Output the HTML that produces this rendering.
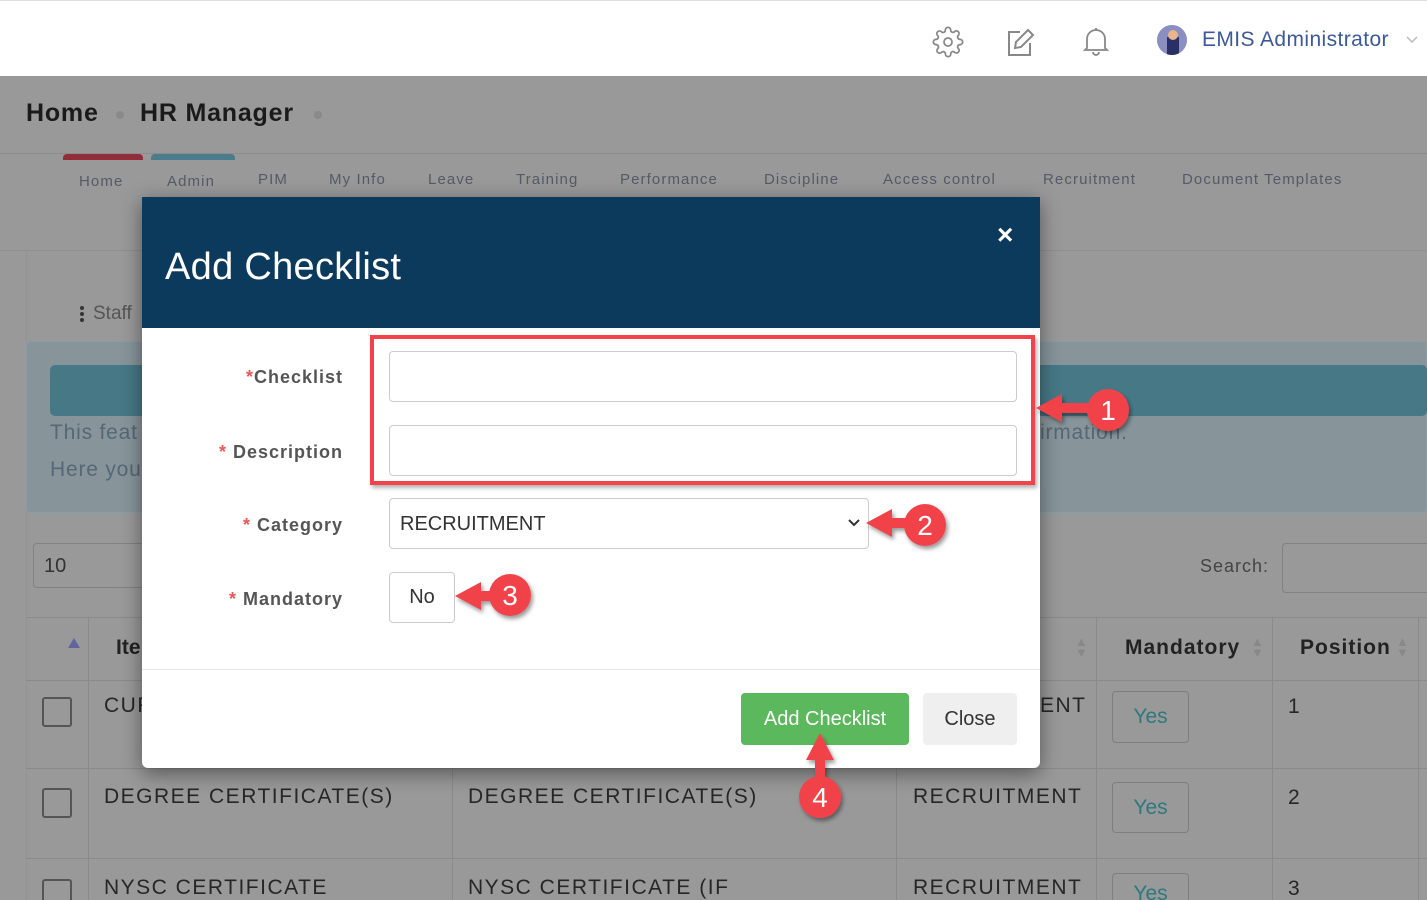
<!DOCTYPE html>
<html style="overflow:hidden;height:900px"><head><meta charset="utf-8"><style>
*{box-sizing:border-box;margin:0;padding:0}
body{width:1427px;height:900px;overflow:hidden;position:relative;background:#999;font-family:"Liberation Sans",sans-serif}
.a{position:absolute}
.t{white-space:nowrap}
</style></head><body>
<!-- top bar -->
<div class="a" style="left:0;top:0;width:1427px;height:76px;background:#fff;border-top:1px solid #ddd"></div>
<svg class="a" style="left:932px;top:26px" width="32" height="32" viewBox="0 0 24 24" fill="none" stroke="#888" stroke-width="1.3"><circle cx="12" cy="12" r="3"/><path d="M19.4 15a1.65 1.65 0 0 0 .33 1.82l.06.06a2 2 0 1 1-2.830 2.83l-.06-.06a1.65 1.65 0 0 0-1.82-.33 1.65 1.65 0 0 0-1 1.51V21a2 2 0 1 1-4 0v-.09A1.65 1.65 0 0 0 9 19.4a1.65 1.65 0 0 0-1.82.33l-.06.06a2 2 0 1 1-2.83-2.830l.06-.06A1.65 1.65 0 0 0 4.68 15a1.65 1.65 0 0 0-1.51-1H3a2 2 0 1 1 0-4h.09A1.650 1.65 0 0 0 4.6 9a1.65 1.65 0 0 0-.33-1.82l-.06-.06a2 2 0 1 1 2.83-2.83l.06.06A1.65 1.65 0 0 0 9 4.68a1.65 1.65 0 0 0 1-1.51V3a2 2 0 1 1 4 0v.09a1.65 1.65 0 0 0 1 1.51 1.65 1.65 0 0 0 1.82-.33l.06-.06a2 2 0 1 1 2.83 2.83l-.06.06A1.65 1.65 0 0 0 19.4 9a1.65 1.65 0 0 0 1.51 1H21a2 2 0 1 1 0 4h-.09a1.65 1.65 0 0 0-1.51 1z"/></svg>
<svg class="a" style="left:1006px;top:27px" width="30" height="30" viewBox="0 0 30 30" fill="none" stroke="#888" stroke-width="2"><path d="M14 5H3v23h21V16"/><path d="M22 3l5 5-12 12-6 1 1-6z"/></svg>
<svg class="a" style="left:1082px;top:26px" width="28" height="30" viewBox="0 0 28 30" fill="none" stroke="#888" stroke-width="1.8"><path d="M5 22V13a9 9 0 0 1 18 0v9l2 2H3z"/><path d="M11 26a3 3 0 0 0 6 0"/><path d="M14 2v2"/></svg>
<div class="a" style="left:1157px;top:25px;width:30px;height:30px;border-radius:50%;background:#8a8ec0;overflow:hidden"><div class="a" style="left:10px;top:12px;width:12px;height:18px;background:#2a2f66"></div><div class="a" style="left:11px;top:5px;width:10px;height:10px;border-radius:50%;background:#e8b58c"></div></div>
<div class="a t" style="left:1202px;top:28px;font-size:21px;color:#3c5a9a;letter-spacing:0.4px">EMIS Administrator</div>
<svg class="a" style="left:1405px;top:35px" width="14" height="9" viewBox="0 0 14 9"><path d="M2 2l5 5 5-5" fill="none" stroke="#bbb" stroke-width="1.5"/></svg>
<!-- breadcrumb -->
<div class="a t" style="left:26px;top:99px;font-size:25px;font-weight:bold;color:#1a1a1a;letter-spacing:0.8px">Home</div>
<div class="a" style="left:116px;top:111px;width:8px;height:8px;border-radius:50%;background:#8a8a8a"></div>
<div class="a t" style="left:140px;top:99px;font-size:25px;font-weight:bold;color:#1a1a1a;letter-spacing:0.8px">HR Manager</div>
<div class="a" style="left:314px;top:111px;width:8px;height:8px;border-radius:50%;background:#8a8a8a"></div>
<div class="a" style="left:0;top:153px;width:1427px;height:1px;background:#8c8c8c"></div>
<div class="a" style="left:63px;top:154px;width:80px;height:6px;background:#922d3a;border-radius:4px 4px 0 0"></div>
<div class="a" style="left:151px;top:154px;width:84px;height:6px;background:#4a7c8c;border-radius:4px 4px 0 0"></div>
<div class="a t" style="top:171px;left:0;font-size:15px;color:#555a66;letter-spacing:1.1px">
<span class="a" style="left:79px;top:2px">Home</span><span class="a" style="left:167px;top:2px">Admin</span><span class="a" style="left:258px">PIM</span><span class="a" style="left:329px">My Info</span><span class="a" style="left:428px">Leave</span><span class="a" style="left:516px">Training</span><span class="a" style="left:620px">Performance</span><span class="a" style="left:764px">Discipline</span><span class="a" style="left:883px">Access control</span><span class="a" style="left:1043px">Recruitment</span><span class="a" style="left:1182px">Document Templates</span></div>
<div class="a" style="left:0;top:250px;width:1427px;height:1px;background:#8f8f8f"></div>
<div class="a" style="left:26px;top:251px;width:1px;height:650px;background:#939393"></div>
<div class="a" style="left:80px;top:306px;width:4px;height:4px;border-radius:50%;background:#333;box-shadow:0 6px 0 #333,0 12px 0 #333"></div>
<div class="a t" style="left:93px;top:303px;font-size:19px;color:#555;">Staff</div>
<div class="a" style="left:26px;top:341px;width:1401px;height:172px;background:#87959b;border-radius:4px;border:1px solid #8a9ca6"></div>
<div class="a" style="left:50px;top:365px;width:1377px;height:51px;background:#477886;border-radius:5px"></div>
<div class="a t" style="left:50px;top:421px;font-size:21px;color:#566775;letter-spacing:0.8px">This feat</div>
<div class="a t" style="left:1040px;top:421px;font-size:21px;color:#566775;letter-spacing:0.8px">irmation.</div>
<div class="a t" style="left:50px;top:458px;font-size:21px;color:#566775;letter-spacing:0.8px">Here you</div>
<div class="a" style="left:33px;top:543px;width:120px;height:45px;border:1px solid #828282;border-radius:4px"></div>
<div class="a t" style="left:44px;top:555px;font-size:20px;color:#333">10</div>
<div class="a t" style="left:1200px;top:556px;font-size:18px;color:#444;letter-spacing:1px">Search:</div>
<div class="a" style="left:1282px;top:543px;width:160px;height:50px;border:1px solid #828282;border-radius:4px"></div>
<!-- table -->
<div class="a" style="left:26px;top:617px;width:1401px;height:1px;background:#8a8a8a"></div>
<div class="a" style="left:26px;top:680px;width:1401px;height:1px;background:#8a8a8a"></div>
<div class="a" style="left:26px;top:768px;width:1401px;height:1px;background:#8a8a8a"></div>
<div class="a" style="left:26px;top:858px;width:1401px;height:1px;background:#8a8a8a"></div>
<div class="a" style="left:88px;top:617px;width:1px;height:283px;background:#8a8a8a"></div>
<div class="a" style="left:452px;top:617px;width:1px;height:283px;background:#8a8a8a"></div>
<div class="a" style="left:896px;top:617px;width:1px;height:283px;background:#8a8a8a"></div>
<div class="a" style="left:1096px;top:617px;width:1px;height:283px;background:#8a8a8a"></div>
<div class="a" style="left:1272px;top:617px;width:1px;height:283px;background:#8a8a8a"></div>
<div class="a" style="left:1418px;top:617px;width:1px;height:283px;background:#8a8a8a"></div>
<div class="a" style="left:68px;top:638px;width:0;height:0;border-left:6px solid transparent;border-right:6px solid transparent;border-bottom:10px solid #6064a0"></div>
<div class="a t" style="left:116px;top:636px;font-size:21px;font-weight:bold;color:#222">Ite</div>
<div class="a t" style="left:1125px;top:636px;font-size:21px;font-weight:bold;color:#222;letter-spacing:1px">Mandatory</div>
<div class="a t" style="left:1300px;top:636px;font-size:21px;font-weight:bold;color:#222;letter-spacing:1px">Position</div>
<div class="a t" style="left:1075px;top:636px;font-size:13px;color:#888;line-height:11px">▲<br>▼</div>
<div class="a t" style="left:1251px;top:636px;font-size:13px;color:#888;line-height:11px">▲<br>▼</div>
<div class="a t" style="left:1396px;top:636px;font-size:13px;color:#888;line-height:11px">▲<br>▼</div>
<div class="a" style="left:42px;top:697px;width:30px;height:30px;border:2px solid #555;border-radius:3px"></div>
<div class="a" style="left:42px;top:788px;width:30px;height:30px;border:2px solid #555;border-radius:3px"></div>
<div class="a" style="left:42px;top:879px;width:30px;height:21px;border:2px solid #555;border-bottom:none;border-radius:3px 3px 0 0"></div>
<div class="a t" style="left:104px;top:694px;font-size:21px;color:#262626;letter-spacing:1.5px">CUF</div>
<div class="a t" style="left:104px;top:785px;font-size:21px;color:#262626;letter-spacing:1.5px">DEGREE CERTIFICATE(S)</div>
<div class="a t" style="left:104px;top:876px;font-size:21px;color:#262626;letter-spacing:1.5px">NYSC CERTIFICATE</div>
<div class="a t" style="left:468px;top:785px;font-size:21px;color:#262626;letter-spacing:1.5px">DEGREE CERTIFICATE(S)</div>
<div class="a t" style="left:468px;top:876px;font-size:21px;color:#262626;letter-spacing:1.5px">NYSC CERTIFICATE (IF</div>
<div class="a t" style="left:1040px;top:694px;font-size:21px;color:#262626;letter-spacing:1.5px">ENT</div>
<div class="a t" style="left:913px;top:785px;font-size:21px;color:#262626;letter-spacing:1.5px">RECRUITMENT</div>
<div class="a t" style="left:913px;top:876px;font-size:21px;color:#262626;letter-spacing:1.5px">RECRUITMENT</div>
<div class="a" style="left:1112px;top:691px;width:77px;height:52px;border:1px solid #7e7e7e;border-radius:4px;font-size:21px;color:#2e7980;text-align:center;line-height:50px">Yes</div>
<div class="a" style="left:1112px;top:782px;width:77px;height:51px;border:1px solid #7e7e7e;border-radius:4px;font-size:21px;color:#2e7980;text-align:center;line-height:50px">Yes</div>
<div class="a" style="left:1112px;top:873px;width:77px;height:27px;border:1px solid #7e7e7e;border-bottom:none;border-radius:4px 4px 0 0;font-size:21px;color:#2e7980;text-align:center;line-height:40px;overflow:hidden">Yes</div>
<div class="a t" style="left:1288px;top:695px;font-size:21px;color:#262626">1</div>
<div class="a t" style="left:1288px;top:786px;font-size:21px;color:#262626">2</div>
<div class="a t" style="left:1288px;top:877px;font-size:21px;color:#262626">3</div>
<!-- modal -->
<div class="a" style="left:142px;top:197px;width:898px;height:571px;background:#fff;border-radius:0 0 6px 6px;box-shadow:0 5px 20px rgba(0,0,0,.45);overflow:hidden">
<div class="a" style="left:0;top:0;width:898px;height:131px;background:#0b3a5c"></div>
<div class="a t" style="left:23px;top:49px;font-size:38px;color:#fff;letter-spacing:0.3px">Add Checklist</div>
<div class="a t" style="left:855px;top:22px;font-size:28px;font-weight:bold;color:#fff">×</div>
<div class="a t" style="right:697px;top:170px;font-size:18px;font-weight:bold;color:#555;letter-spacing:1px"><span style="color:#e55">*</span>Checklist</div>
<div class="a t" style="right:697px;top:245px;font-size:18px;font-weight:bold;color:#555;letter-spacing:1px"><span style="color:#e55">*</span> Description</div>
<div class="a t" style="right:697px;top:318px;font-size:18px;font-weight:bold;color:#555;letter-spacing:1px"><span style="color:#e55">*</span> Category</div>
<div class="a t" style="right:697px;top:392px;font-size:18px;font-weight:bold;color:#555;letter-spacing:1px"><span style="color:#e55">*</span> Mandatory</div>
<div class="a" style="left:247px;top:154px;width:628px;height:51px;border:1px solid #ccc;border-radius:4px"></div>
<div class="a" style="left:247px;top:228px;width:628px;height:51px;border:1px solid #ccc;border-radius:4px"></div>
<div class="a" style="left:247px;top:301px;width:480px;height:51px;border:1px solid #ccc;border-radius:4px"></div>
<div class="a t" style="left:258px;top:316px;font-size:20px;color:#333">RECRUITMENT</div>
<svg class="a" style="left:705px;top:321px" width="14" height="10" viewBox="0 0 14 10"><path d="M2 2l5 5 5-5" fill="none" stroke="#333" stroke-width="2"/></svg>
<div class="a" style="left:247px;top:375px;width:66px;height:51px;border:1px solid #ccc;border-radius:4px;font-size:20px;color:#333;text-align:center;line-height:49px">No</div>
<div class="a" style="left:0;top:472px;width:898px;height:1px;background:#e5e5e5"></div>
<div class="a" style="left:599px;top:496px;width:168px;height:52px;background:#5cb85c;border-radius:4px;font-size:20px;color:#fff;text-align:center;line-height:52px">Add Checklist</div>
<div class="a" style="left:781px;top:496px;width:94px;height:52px;background:#efefef;border-radius:4px;font-size:20px;color:#333;text-align:center;line-height:52px">Close</div>
</div>
<!-- annotations -->
<div class="a" style="left:370px;top:335px;width:665px;height:150px;border:4px solid #f2434a;box-shadow:2px 3px 4px rgba(0,0,0,.3)"></div>
<svg class="a" style="left:0;top:0" width="1427" height="900" viewBox="0 0 1427 900">
<defs><filter id="s"><feDropShadow dx="2" dy="3" stdDeviation="2" flood-opacity=".4"/></filter></defs>
<g fill="#f2434a" filter="url(#s)">
<path d="M1036 408l26-14v9h30v10h-30v9z"/><circle cx="1108" cy="410" r="21"/>
<path d="M866 523l26-14v9h20v10h-20v9z"/><circle cx="925" cy="525" r="21"/>
<path d="M455 596l26-14v9h16v10h-16v9z"/><circle cx="510" cy="595" r="21"/>
<path d="M820 733l-14 27h9v20h10v-20h9z"/><circle cx="820" cy="797" r="21"/>
</g>
<g fill="#fff" font-family="Liberation Sans" font-size="28" text-anchor="middle">
<text x="1108" y="420">1</text><text x="925" y="535">2</text><text x="510" y="605">3</text><text x="820" y="807">4</text></g>
</svg>
</body></html>
